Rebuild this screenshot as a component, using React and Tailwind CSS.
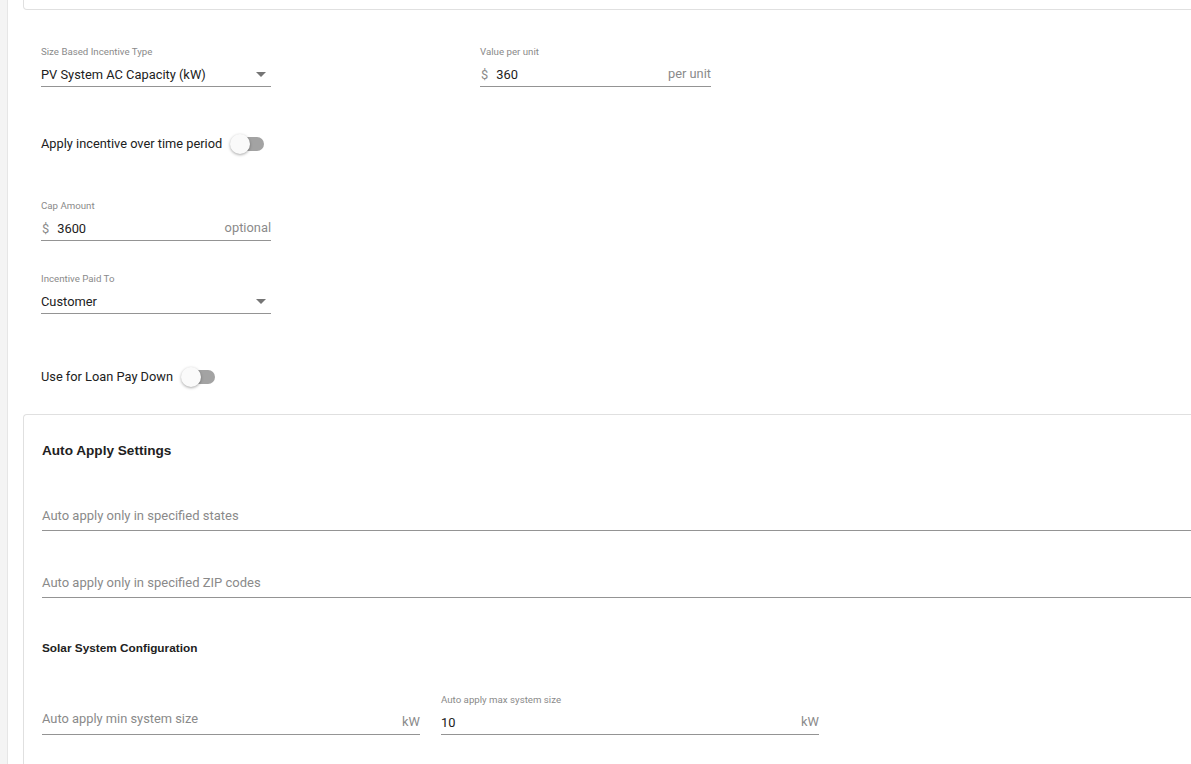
import React from "react";

const Field = ({ label, prefix, value, placeholder, suffix, select, width = "w-[230px]" }) => (
  <div className={`${width} shrink-0`}>
    <div className="h-[12px] text-[9.7px] leading-[12px] text-[#8a8a8a]">{label}</div>
    <div className="mt-[4px] h-[25px] pt-[2px] flex items-center border-b border-[#949494] text-[12.85px]">
      {prefix && <span className="text-[#8a8a8a] mr-[8px] ml-[1px]">{prefix}</span>}
      {value ? (
        <span className="text-[#212121] flex-1">{value}</span>
      ) : (
        <span className="text-[#8a8a8a] flex-1 mb-[8px]">{placeholder}</span>
      )}
      {suffix && <span className="text-[#8a8a8a] mb-[3px]">{suffix}</span>}
      {select && (
        <svg width="10" height="5" viewBox="0 0 10 5" className="mr-[5px] mb-[2px]">
          <path d="M0 0h10L5 5z" fill="#757575" />
        </svg>
      )}
    </div>
  </div>
);

const Toggle = () => (
  <div className="relative w-[34px] h-[14px] ml-[8px]">
    <div className="absolute left-[3px] top-0 w-[31px] h-[14px] rounded-full bg-[#a3a3a3]" />
    <div className="absolute left-0 -top-[3px] w-[20px] h-[20px] rounded-full bg-[#fafafa] shadow-[0_1px_3px_rgba(0,0,0,0.35)]" />
  </div>
);

const LineInput = ({ placeholder }) => (
  <div className="h-[31px] flex items-center border-b border-[#949494] text-[13px] text-[#8a8a8a]">
    <span className="mt-[2px]">{placeholder}</span>
  </div>
);

export default function App() {
  return (
    <div
      className="w-[1191px] h-[764px] overflow-hidden flex bg-white"
      style={{ fontFamily: "Roboto, 'Liberation Sans', sans-serif" }}
    >
      <div className="w-[8px] shrink-0 bg-[#f4f4f4] border-r border-[#e6e6e6]" />
      <div className="w-[1260px] shrink-0 pl-[15px]">
        <div className="h-[10px] border-l border-b border-r border-[#e0e0e0] rounded-b-[4px]" />

        <div className="pl-[18px] text-[#212121]">
          <div className="mt-[36px] flex gap-[209px]">
            <Field label="Size Based Incentive Type" value="PV System AC Capacity (kW)" select />
            <Field label="Value per unit" prefix="$" value="360" suffix="per unit" width="w-[231px]" />
          </div>

          <div className="mt-[47px] h-[20px] flex items-center text-[12.8px]">
            <span>Apply incentive over time period</span>
            <Toggle />
          </div>

          <div className="mt-[46px]">
            <Field label="Cap Amount" prefix="$" value="3600" suffix="optional" />
          </div>

          <div className="mt-[32px]">
            <Field label="Incentive Paid To" value="Customer" select />
          </div>

          <div className="mt-[53px] h-[20px] flex items-center text-[12.8px]">
            <span>Use for Loan Pay Down</span>
            <Toggle />
          </div>
        </div>

        <div className="mt-[27px] h-[400px] border-l border-t border-[#e0e0e0] rounded-tl-[4px] pl-[18px] pt-[26px]">
          <div
            className="h-[20px] leading-[20px] text-[13.6px] font-bold text-[#212121]"
            style={{ fontFamily: "'Liberation Sans', Arial, sans-serif" }}
          >
            Auto Apply Settings
          </div>

          <div className="mt-[39px]">
            <LineInput placeholder="Auto apply only in specified states" />
          </div>
          <div className="mt-[36px]">
            <LineInput placeholder="Auto apply only in specified ZIP codes" />
          </div>

          <div
            className="mt-[42px] h-[16px] leading-[16px] text-[11.8px] font-bold text-[#212121]"
            style={{ fontFamily: "'Liberation Sans', Arial, sans-serif" }}
          >
            Solar System Configuration
          </div>

          <div className="mt-[38px] flex gap-[21px]">
            <Field label="" placeholder="Auto apply min system size" suffix="kW" width="w-[378px]" />
            <Field label="Auto apply max system size" value="10" suffix="kW" width="w-[378px]" />
          </div>
        </div>
      </div>
    </div>
  );
}
